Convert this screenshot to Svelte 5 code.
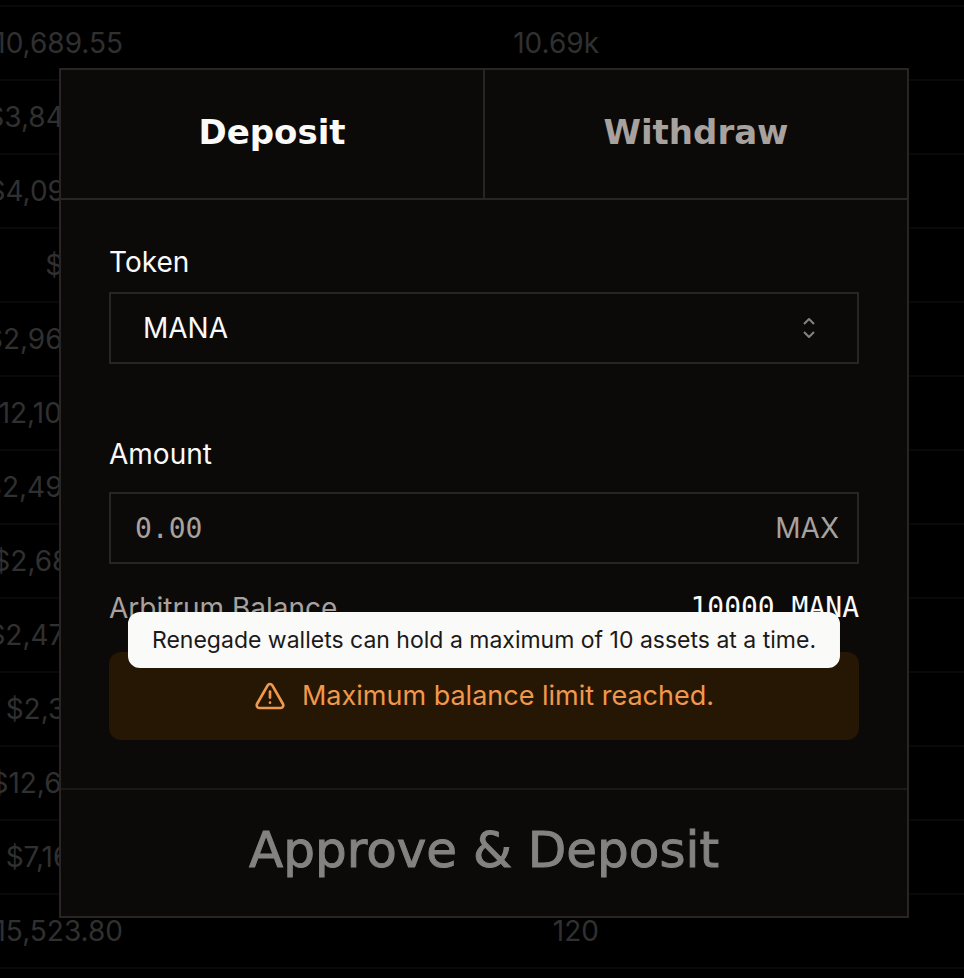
<script lang="ts">
	const rows = [
		{ value: '$10,689.55', amount: '10.69k' },
		{ value: '$3,846.20', amount: '' },
		{ value: '$4,096.35', amount: '' },
		{ value: '$2.00', amount: '' },
		{ value: '$2,960.48', amount: '' },
		{ value: '$12,100.44', amount: '' },
		{ value: '$2,490.46', amount: '' },
		{ value: '$2,684.01', amount: '' },
		{ value: '$2,473.60', amount: '' },
		{ value: '$2,311.71', amount: '' },
		{ value: '$12,614.17', amount: '' },
		{ value: '$7,169.31', amount: '' },
		{ value: '$15,523.80', amount: '120' }
	];

	let tab = 'Deposit';
	let token = 'MANA';
	let amount = '';
</script>

<main>
	<table>
		<tbody>
			{#each rows as row}
				<tr>
					<td class="value">{row.value}</td>
					<td class="amount">{row.amount}</td>
					<td></td>
				</tr>
			{/each}
		</tbody>
	</table>

	<div class="overlay">
		<div class="dialog" role="dialog" aria-label="Transfer">
			<div class="tabs">
				{#each ['Deposit', 'Withdraw'] as name}
					<button class="tab" class:active={tab === name} on:click={() => (tab = name)}>{name}</button>
				{/each}
			</div>

			<div class="body">
				<label for="token">Token</label>
				<div class="select">
					<select id="token" bind:value={token}>
						<option>MANA</option>
					</select>
					<svg class="chevrons" viewBox="0 0 28 28" aria-hidden="true">
						<path d="m9 10 5-5 5 5" />
						<path d="m9 18 5 5 5-5" />
					</svg>
				</div>

				<label for="amount" class="amount-label">Amount</label>
				<div class="field">
					<input id="amount" type="text" placeholder="0.00" bind:value={amount} />
					<button class="max" on:click={() => (amount = '10000')}>MAX</button>
				</div>

				<div class="balance">
					<span>Arbitrum Balance</span>
					<span class="mono">10000 MANA</span>
				</div>

				<div class="alert">
					<svg class="warning" viewBox="0 0 24 24" aria-hidden="true">
						<path d="m21.73 18-8-14a2 2 0 0 0-3.48 0l-8 14A2 2 0 0 0 4 21h16a2 2 0 0 0 1.73-3Z" />
						<path d="M12 8.6v4.6" />
						<path d="M12 17h.01" />
					</svg>
					<span>Maximum balance limit reached.</span>
					<div class="tooltip" role="tooltip">
						Renegade wallets can hold a maximum of 10 assets at a time.
					</div>
				</div>
			</div>

			<button class="submit" disabled>Approve & Deposit</button>
		</div>
	</div>
</main>

<style>
	:global(body) {
		margin: 0;
		background: #000;
	}

	main {
		position: relative;
		height: 100vh;
		overflow: hidden;
		font-family: Inter, 'Liberation Sans', sans-serif;
		font-size: 28px;
		line-height: 28px;
		color: #fafaf9;
	}

	button,
	input,
	select {
		font: inherit;
		color: inherit;
		margin: 0;
		padding: 0;
		border: none;
		border-radius: 0;
		background: none;
		outline: none;
	}

	/* scrolled sideways, so the dollar column is cut at the left */
	table {
		width: calc(100% + 77px);
		margin: 5px 0 0 -77px;
		border-top: 2px solid #090909;
		border-spacing: 0;
		table-layout: fixed;
		color: #303030;
	}

	td {
		box-sizing: border-box;
		height: 74px;
		padding: 0;
		border-bottom: 2px solid #090909;
		text-align: right;
		white-space: nowrap;
	}

	.value {
		width: 200px;
	}

	.amount {
		width: 476px;
	}

	.overlay {
		position: absolute;
		inset: 0;
		padding: 68px 55px 60px 59px;
	}

	.dialog {
		border: 2px solid #292524;
		background: #0c0a09;
	}

	.tabs {
		display: flex;
		height: 128px;
		border-bottom: 2px solid #292524;
	}

	.tab {
		flex: 1 1 0;
		padding-bottom: 4px;
		font-family: 'DejaVu Sans', sans-serif;
		font-size: 34px;
		font-weight: 700;
		color: #a8a29e;
	}

	.tab:first-child {
		border-right: 2px solid #292524;
	}

	.tab.active {
		color: #fafaf9;
	}

	.body {
		padding: 48px;
	}

	label {
		display: block;
		margin-bottom: 16px;
	}

	.amount-label {
		margin: 76px 0 24px;
	}

	.select,
	.field {
		display: flex;
		align-items: center;
		height: 68px;
		border: 2px solid #292524;
	}

	.select {
		position: relative;
	}

	select {
		width: 100%;
		height: 100%;
		padding: 0 32px;
		appearance: none;
	}

	svg {
		fill: none;
		stroke: currentColor;
		stroke-linejoin: round;
	}

	.chevrons {
		position: absolute;
		right: 34px;
		width: 28px;
		height: 28px;
		stroke-width: 2;
		color: #858382;
		pointer-events: none;
	}

	input {
		flex: 1;
		min-width: 0;
		height: 100%;
		padding: 0 24px;
		font-family: 'DejaVu Sans Mono', monospace;
	}

	input::placeholder {
		color: #a8a29e;
		opacity: 1;
	}

	.max {
		padding: 0 18px;
		color: #a8a29e;
	}

	.balance {
		display: flex;
		justify-content: space-between;
		margin: 30px 0;
		color: #a8a29e;
	}

	.mono {
		font-family: 'DejaVu Sans Mono', monospace;
		color: #fafaf9;
	}

	.alert {
		position: relative;
		display: flex;
		align-items: center;
		justify-content: center;
		gap: 16px;
		height: 88px;
		border-radius: 12px;
		background: #261704;
		color: #f0984c;
		font-size: 27px;
	}

	.warning {
		width: 32px;
		height: 32px;
		stroke-width: 2;
		stroke-linecap: round;
	}

	.tooltip {
		position: absolute;
		bottom: calc(100% - 16px);
		left: 50%;
		transform: translateX(-50%);
		padding: 14px 24px;
		border-radius: 12px;
		background: #fafaf9;
		color: #1c1917;
		font-size: 23px;
		white-space: nowrap;
	}

	.submit {
		width: 100%;
		height: 128px;
		padding-bottom: 6px;
		border-top: 2px solid #1b1918;
		font-family: 'DejaVu Sans', sans-serif;
		font-size: 50px;
		-webkit-text-stroke: 1px currentColor;
		color: #838281;
	}
</style>
